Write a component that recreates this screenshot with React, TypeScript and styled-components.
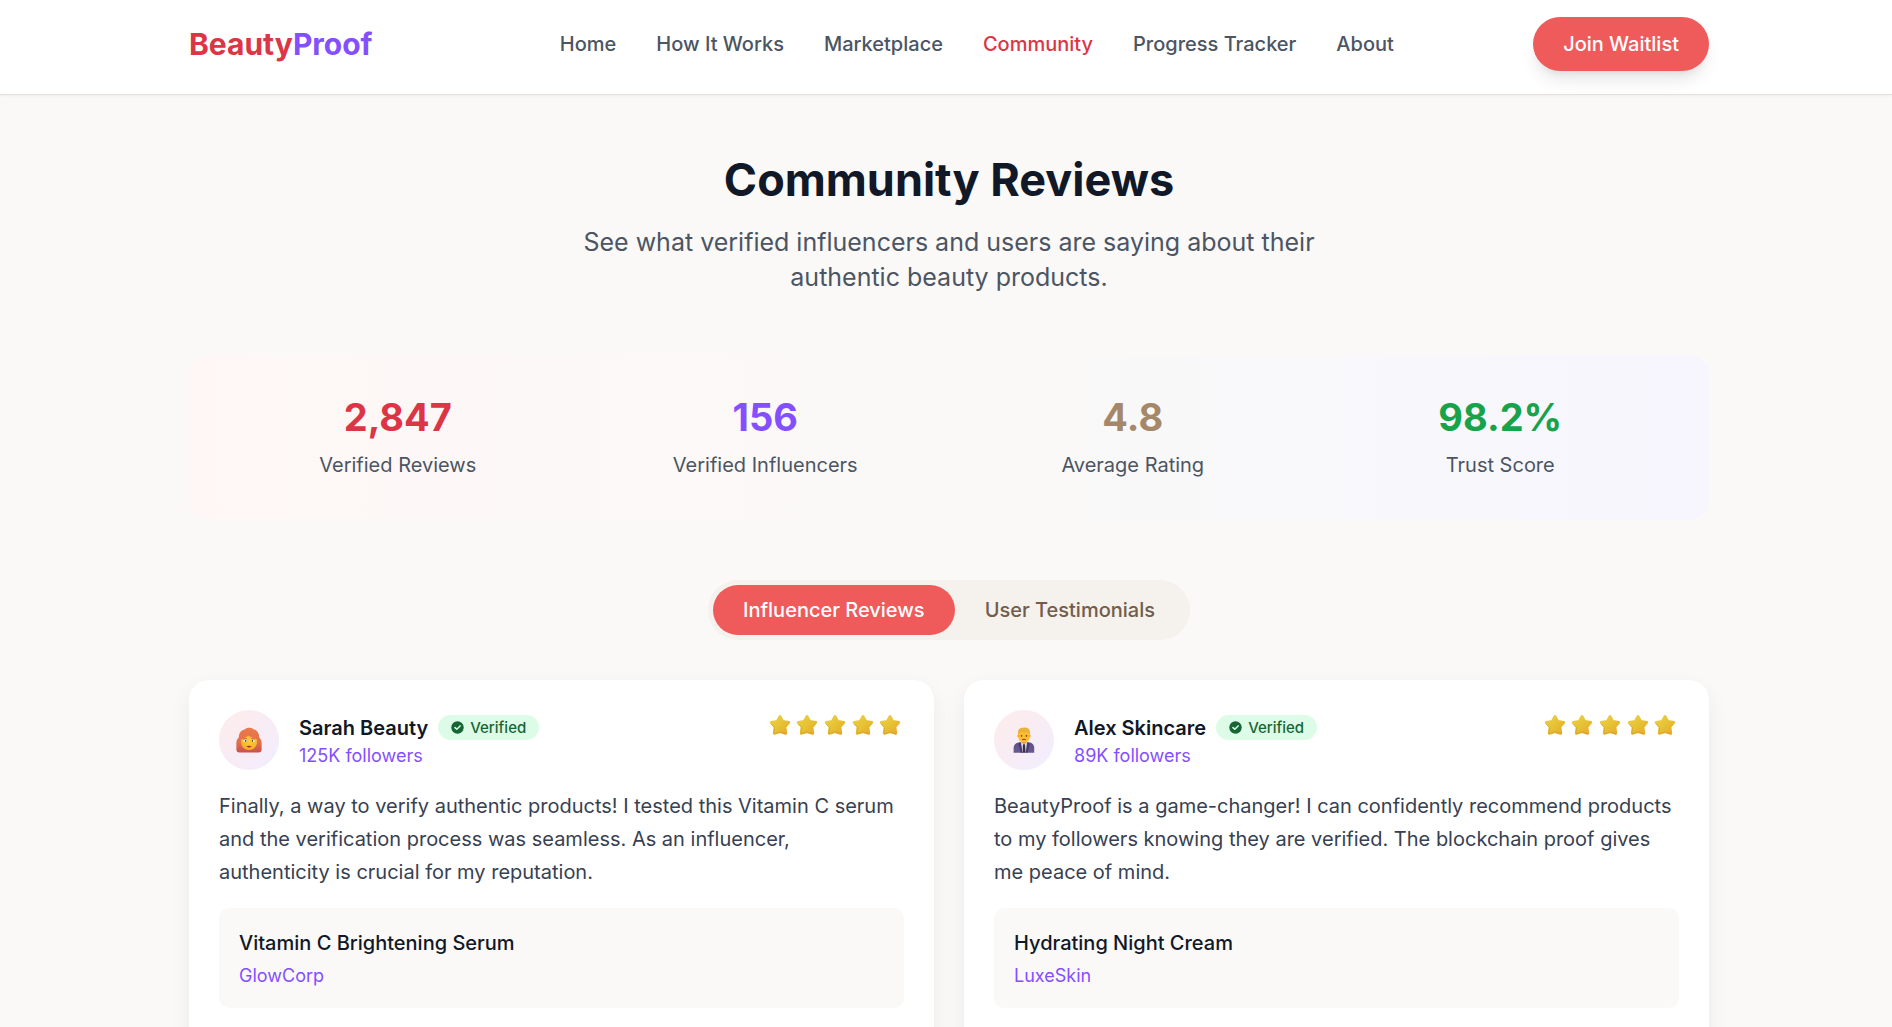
import React, { useState } from "react";
import styled, { createGlobalStyle } from "styled-components";

const GlobalStyle = createGlobalStyle`
  *, *::before, *::after { box-sizing: border-box; }
  body {
    margin: 0;
    background: #faf9f7;
    color: #111827;
    font-family: Inter, "Noto Sans", sans-serif;
    font-size: 20px;
    line-height: 30px;
  }
  h1, h2, h3, p, ul, dl, dd { margin: 0; padding: 0; }
  ul { list-style: none; }
  a { color: inherit; text-decoration: none; }
  button { font: inherit; border: 0; cursor: pointer; }
`;

const red = "#dc3545";
const violet = "#844fff";
const coral = "#ef5a5a";
const slate = "#4b5563";

const Page = styled.div`
  height: 100vh;
  overflow: hidden;
`;

const Header = styled.header`
  background: #fff;
  border-bottom: 1px solid #e9dfd6;
  box-shadow: 0 1px 3px rgba(0, 0, 0, 0.05);
`;

const Container = styled.div`
  max-width: 1606px;
  margin: 0 auto;
  padding: 0 40px 0 46px;
`;

const HeaderRow = styled(Container)`
  display: flex;
  align-items: center;
  justify-content: space-between;
  height: 94px;
  padding-bottom: 6px;
`;

const Logo = styled.a`
  padding-right: 48px;
  font-size: 30px;
  line-height: 40px;
  font-weight: 700;
  color: ${red};

  span { color: ${violet}; }
`;

const NavList = styled.ul`
  display: flex;
  gap: 40px;
`;

const NavLink = styled.a<{ $active?: boolean }>`
  font-weight: 500;
  color: ${(p) => (p.$active ? red : slate)};
`;

const JoinButton = styled.button`
  padding: 12px 30px;
  border-radius: 27px;
  background: ${coral};
  color: #fff;
  font-weight: 500;
  box-shadow: 0 12px 18px -4px rgba(0, 0, 0, 0.1), 0 5px 8px -5px rgba(0, 0, 0, 0.1);
`;

const Main = styled(Container).attrs({ as: "main" })`
  padding-top: 60px;
`;

const Intro = styled.div`
  text-align: center;
  margin-bottom: 60px;
`;

const Title = styled.h1`
  font-size: 45px;
  line-height: 50px;
  font-weight: 700;
  margin-bottom: 20px;
`;

const Subtitle = styled.p`
  max-width: 840px;
  margin: 0 auto;
  font-size: 25px;
  line-height: 35px;
  color: ${slate};
`;

const Stats = styled.dl`
  display: grid;
  grid-template-columns: repeat(4, 1fr);
  gap: 30px;
  padding: 40px;
  margin-bottom: 60px;
  border-radius: 20px;
  background: linear-gradient(to right, #fef7f6, #faf9f7 50%, #f7f6fe);
  text-align: center;
`;

const Stat = styled.div`
  display: flex;
  flex-direction: column-reverse;
  gap: 10px;
`;

const StatLabel = styled.dt`
  color: ${slate};
`;

const StatValue = styled.dd<{ $color: string }>`
  font-size: 38px;
  line-height: 45px;
  font-weight: 700;
  color: ${(p) => p.$color};
`;

const TabBar = styled.div`
  display: flex;
  width: fit-content;
  margin: 0 auto 40px;
  padding: 5px;
  border-radius: 30px;
  background: #f5f2ed;
`;

const Tab = styled.button<{ $selected: boolean }>`
  padding: 10px 30px;
  border-radius: 25px;
  font-weight: 500;
  background: ${(p) => (p.$selected ? coral : "transparent")};
  color: ${(p) => (p.$selected ? "#fff" : "#735c4b")};
`;

const Cards = styled.div`
  display: grid;
  grid-template-columns: repeat(2, 1fr);
  gap: 30px;
`;

const Card = styled.article`
  padding: 30px 30px 60px;
  border-radius: 20px;
  background: #fff;
  box-shadow: 0 8px 24px -2px rgba(0, 0, 0, 0.07);
`;

const CardHead = styled.div`
  display: flex;
  align-items: flex-start;
  justify-content: space-between;
  margin-bottom: 20px;
`;

const Person = styled.div`
  display: flex;
  align-items: center;
  gap: 20px;
`;

const Avatar = styled.div`
  display: flex;
  align-items: center;
  justify-content: center;
  width: 60px;
  height: 60px;
  border-radius: 50%;
  background: linear-gradient(135deg, #feecea, #f1edff);
`;

const NameRow = styled.div`
  display: flex;
  align-items: center;
  gap: 10px;
`;

const Name = styled.h2`
  font-size: 20px;
  line-height: 30px;
  font-weight: 600;
`;

const Badge = styled.span`
  display: flex;
  align-items: center;
  gap: 6px;
  height: 25px;
  padding: 0 13px;
  border-radius: 13px;
  background: #dcfce7;
  color: #166534;
  font-size: 15px;
  line-height: 20px;
  font-weight: 500;
`;

const Accent = styled.p`
  font-size: 18px;
  line-height: 25px;
  color: ${violet};
`;

const Stars = styled.div`
  display: grid;
  grid-template-columns: repeat(5, 1fr);
  place-items: center;
  width: 138px;
  height: 30px;
`;

const Quote = styled.p`
  line-height: 33px;
  color: #374151;
  margin-bottom: 19px;
`;

const Product = styled.div`
  display: flex;
  flex-direction: column;
  gap: 5px;
  padding: 20px;
  border-radius: 10px;
  background: #faf9f7;
`;

const ProductName = styled.h3`
  font-size: 20px;
  line-height: 30px;
  font-weight: 500;
`;

function VerifiedIcon() {
  return (
    <svg width="13" height="13" viewBox="0 0 13 13" aria-hidden="true">
      <circle cx="6.5" cy="6.5" r="6.2" fill="#166534" />
      <path d="M4 6.6 5.8 8.3 9.1 4.9" fill="none" stroke="#dcfce7" strokeWidth="1.5" strokeLinecap="round" strokeLinejoin="round" />
    </svg>
  );
}

function Star() {
  return (
    <svg width="22" height="22" viewBox="0 0 22 22" aria-hidden="true">
      <defs>
        <linearGradient id="starFill" x1="0" y1="0" x2="1" y2="1">
          <stop offset="0" stopColor="#efcf45" />
          <stop offset="0.5" stopColor="#e6c235" />
          <stop offset="1" stopColor="#eaa62e" />
        </linearGradient>
      </defs>
      <path
        d="M11 2.4 13.8 7.4 19.8 8.4 16 12.9 16.8 19.4 11 17.6 5.2 19.4 6 12.9 2.2 8.4 8.2 7.4Z"
        fill="url(#starFill)"
        stroke="url(#starFill)"
        strokeWidth="2.8"
        strokeLinejoin="round"
      />
      <path d="M1.8 9.6 5.6 13.6 5 19.8 11 18 17 19.8" fill="none" stroke="#c9952a" strokeWidth="1" strokeLinejoin="round" opacity="0.5" />
    </svg>
  );
}

function WomanFace() {
  return (
    <svg width="26" height="26" viewBox="0 0 26 26" role="img" aria-label="Sarah Beauty">
      <defs>
        <linearGradient id="womanHair" x1="0" y1="0" x2="0" y2="1">
          <stop offset="0" stopColor="#ec7a4a" />
          <stop offset="0.6" stopColor="#e0704c" />
          <stop offset="1" stopColor="#cc4f4a" />
        </linearGradient>
        <radialGradient id="womanSkin" cx="0.55" cy="0.4" r="0.7">
          <stop offset="0" stopColor="#ffcf38" />
          <stop offset="1" stopColor="#f3a52e" />
        </radialGradient>
      </defs>
      <path d="M8.500 2.600C10.500.2 15.500.2 17.500 2.200 21.500 3.200 23.200 6.800 23.200 10.500 25.500 12.500 25.800 15 25.600 18V22.600C25.600 24.600 24.500 25.600 22.600 25.600H3.400C1.500 25.600.4 24.600.4 22.600V18C.2 15 .5 12.500 2.800 10.500 2.800 6.800 4.500 3.400 8.500 2.600Z" fill="url(#womanHair)" />
      <path d="M5 12.500C7 11.200 10 10.200 12 8.400 14.500 10.400 18.500 10.600 21 12.500 21.800 18.500 18.500 23 13 23S4.200 18.500 5 12.500Z" fill="url(#womanSkin)" />
      <path d="M7.600 11.900 10.300 11.700M15.700 11.700 18.400 11.900" stroke="#9f4a2d" strokeWidth="0.8" strokeLinecap="round" />
      <ellipse cx="9.200" cy="13.900" rx="1.900" ry="1.200" fill="#fff" />
      <ellipse cx="16.800" cy="13.900" rx="1.900" ry="1.200" fill="#fff" />
      <circle cx="9.600" cy="13.900" r="0.900" fill="#4a2e3c" />
      <circle cx="16.400" cy="13.900" r="0.900" fill="#4a2e3c" />
      <path d="M10.400 19.200Q13 18.300 15.600 19.200 13 21.600 10.400 19.200Z" fill="#b8203c" />
    </svg>
  );
}

function OfficeWorker() {
  return (
    <svg width="26" height="26" viewBox="0 0 26 26" role="img" aria-label="Alex Skincare">
      <defs>
        <linearGradient id="suit" x1="0" y1="0" x2="0" y2="1">
          <stop offset="0" stopColor="#5d5288" />
          <stop offset="1" stopColor="#67598f" />
        </linearGradient>
      </defs>
      <path d="M2.600 25.800V21C2.600 17.500 5 15.600 8.500 15.200H17.500C21 15.600 23.200 17.500 23.200 21V25.800Z" fill="url(#suit)" />
      <path d="M10 15H16L14.800 25.800H11.300Z" fill="#e5dced" />
      <path d="M12 17.200H14L14.600 25.800H11.500Z" fill="#393143" />
      <path d="M9.300 15 11.500 25.800H9.800L7.400 17ZM16.700 15 15 25.800H16.500L18.600 17Z" fill="#463b6b" />
      <path d="M10.600 12H15.400V15.600L13 17.300 10.600 15.600Z" fill="#e89325" />
      <path d="M7.400 4.500H18.600V9.800C18.600 13.500 16.200 15.400 13 15.400S7.400 13.500 7.400 9.800Z" fill="#ffbd2d" />
      <circle cx="7.600" cy="9" r="1.300" fill="#f7a92c" />
      <circle cx="18.400" cy="9" r="1.300" fill="#f7a92c" />
      <path d="M7 8V4.600C7.200 1.800 9.500.6 12 .8 15.500 0 18.600 1.600 19 4.800V8L17.700 5.400 9 5.200Z" fill="#e9b33b" />
      <circle cx="10.600" cy="8.900" r="0.800" fill="#5a392b" />
      <circle cx="15.400" cy="8.900" r="0.800" fill="#5a392b" />
      <path d="M11.400 12.500Q13 11.800 14.600 12.500" fill="none" stroke="#9e3c28" strokeWidth="1" strokeLinecap="round" />
    </svg>
  );
}

const navItems = ["Home", "How It Works", "Marketplace", "Community", "Progress Tracker", "About"];

const stats = [
  { value: "2,847", label: "Verified Reviews", color: red },
  { value: "156", label: "Verified Influencers", color: violet },
  { value: "4.8", label: "Average Rating", color: "#a58869" },
  { value: "98.2%", label: "Trust Score", color: "#16a34a" },
];

const tabs = ["Influencer Reviews", "User Testimonials"];

const reviews = [
  {
    name: "Sarah Beauty",
    followers: "125K followers",
    portrait: <WomanFace />,
    quote:
      "Finally, a way to verify authentic products! I tested this Vitamin C serum and the verification process was seamless. As an influencer, authenticity is crucial for my reputation.",
    product: "Vitamin C Brightening Serum",
    brand: "GlowCorp",
  },
  {
    name: "Alex Skincare",
    followers: "89K followers",
    portrait: <OfficeWorker />,
    quote:
      "BeautyProof is a game-changer! I can confidently recommend products to my followers knowing they are verified. The blockchain proof gives me peace of mind.",
    product: "Hydrating Night Cream",
    brand: "LuxeSkin",
  },
];

export default function App() {
  const [tab, setTab] = useState(0);

  return (
    <Page>
      <GlobalStyle />
      <Header>
        <HeaderRow>
          <Logo href="#">
            Beauty<span>Proof</span>
          </Logo>
          <nav>
            <NavList>
              {navItems.map((item) => (
                <li key={item}>
                  <NavLink href="#" $active={item === "Community"}>
                    {item}
                  </NavLink>
                </li>
              ))}
            </NavList>
          </nav>
          <JoinButton type="button">Join Waitlist</JoinButton>
        </HeaderRow>
      </Header>
      <Main>
        <Intro>
          <Title>Community Reviews</Title>
          <Subtitle>See what verified influencers and users are saying about their authentic beauty products.</Subtitle>
        </Intro>
        <Stats>
          {stats.map((s) => (
            <Stat key={s.label}>
              <StatLabel>{s.label}</StatLabel>
              <StatValue $color={s.color}>{s.value}</StatValue>
            </Stat>
          ))}
        </Stats>
        <TabBar role="tablist">
          {tabs.map((label, i) => (
            <Tab key={label} type="button" role="tab" aria-selected={tab === i} $selected={tab === i} onClick={() => setTab(i)}>
              {label}
            </Tab>
          ))}
        </TabBar>
        <Cards>
          {reviews.map((r) => (
            <Card key={r.name}>
              <CardHead>
                <Person>
                  <Avatar>{r.portrait}</Avatar>
                  <div>
                    <NameRow>
                      <Name>{r.name}</Name>
                      <Badge>
                        <VerifiedIcon />
                        Verified
                      </Badge>
                    </NameRow>
                    <Accent>{r.followers}</Accent>
                  </div>
                </Person>
                <Stars role="img" aria-label="5 out of 5 stars">
                  {[1, 2, 3, 4, 5].map((n) => (
                    <Star key={n} />
                  ))}
                </Stars>
              </CardHead>
              <Quote>{r.quote}</Quote>
              <Product>
                <ProductName>{r.product}</ProductName>
                <Accent>{r.brand}</Accent>
              </Product>
            </Card>
          ))}
        </Cards>
      </Main>
    </Page>
  );
}
